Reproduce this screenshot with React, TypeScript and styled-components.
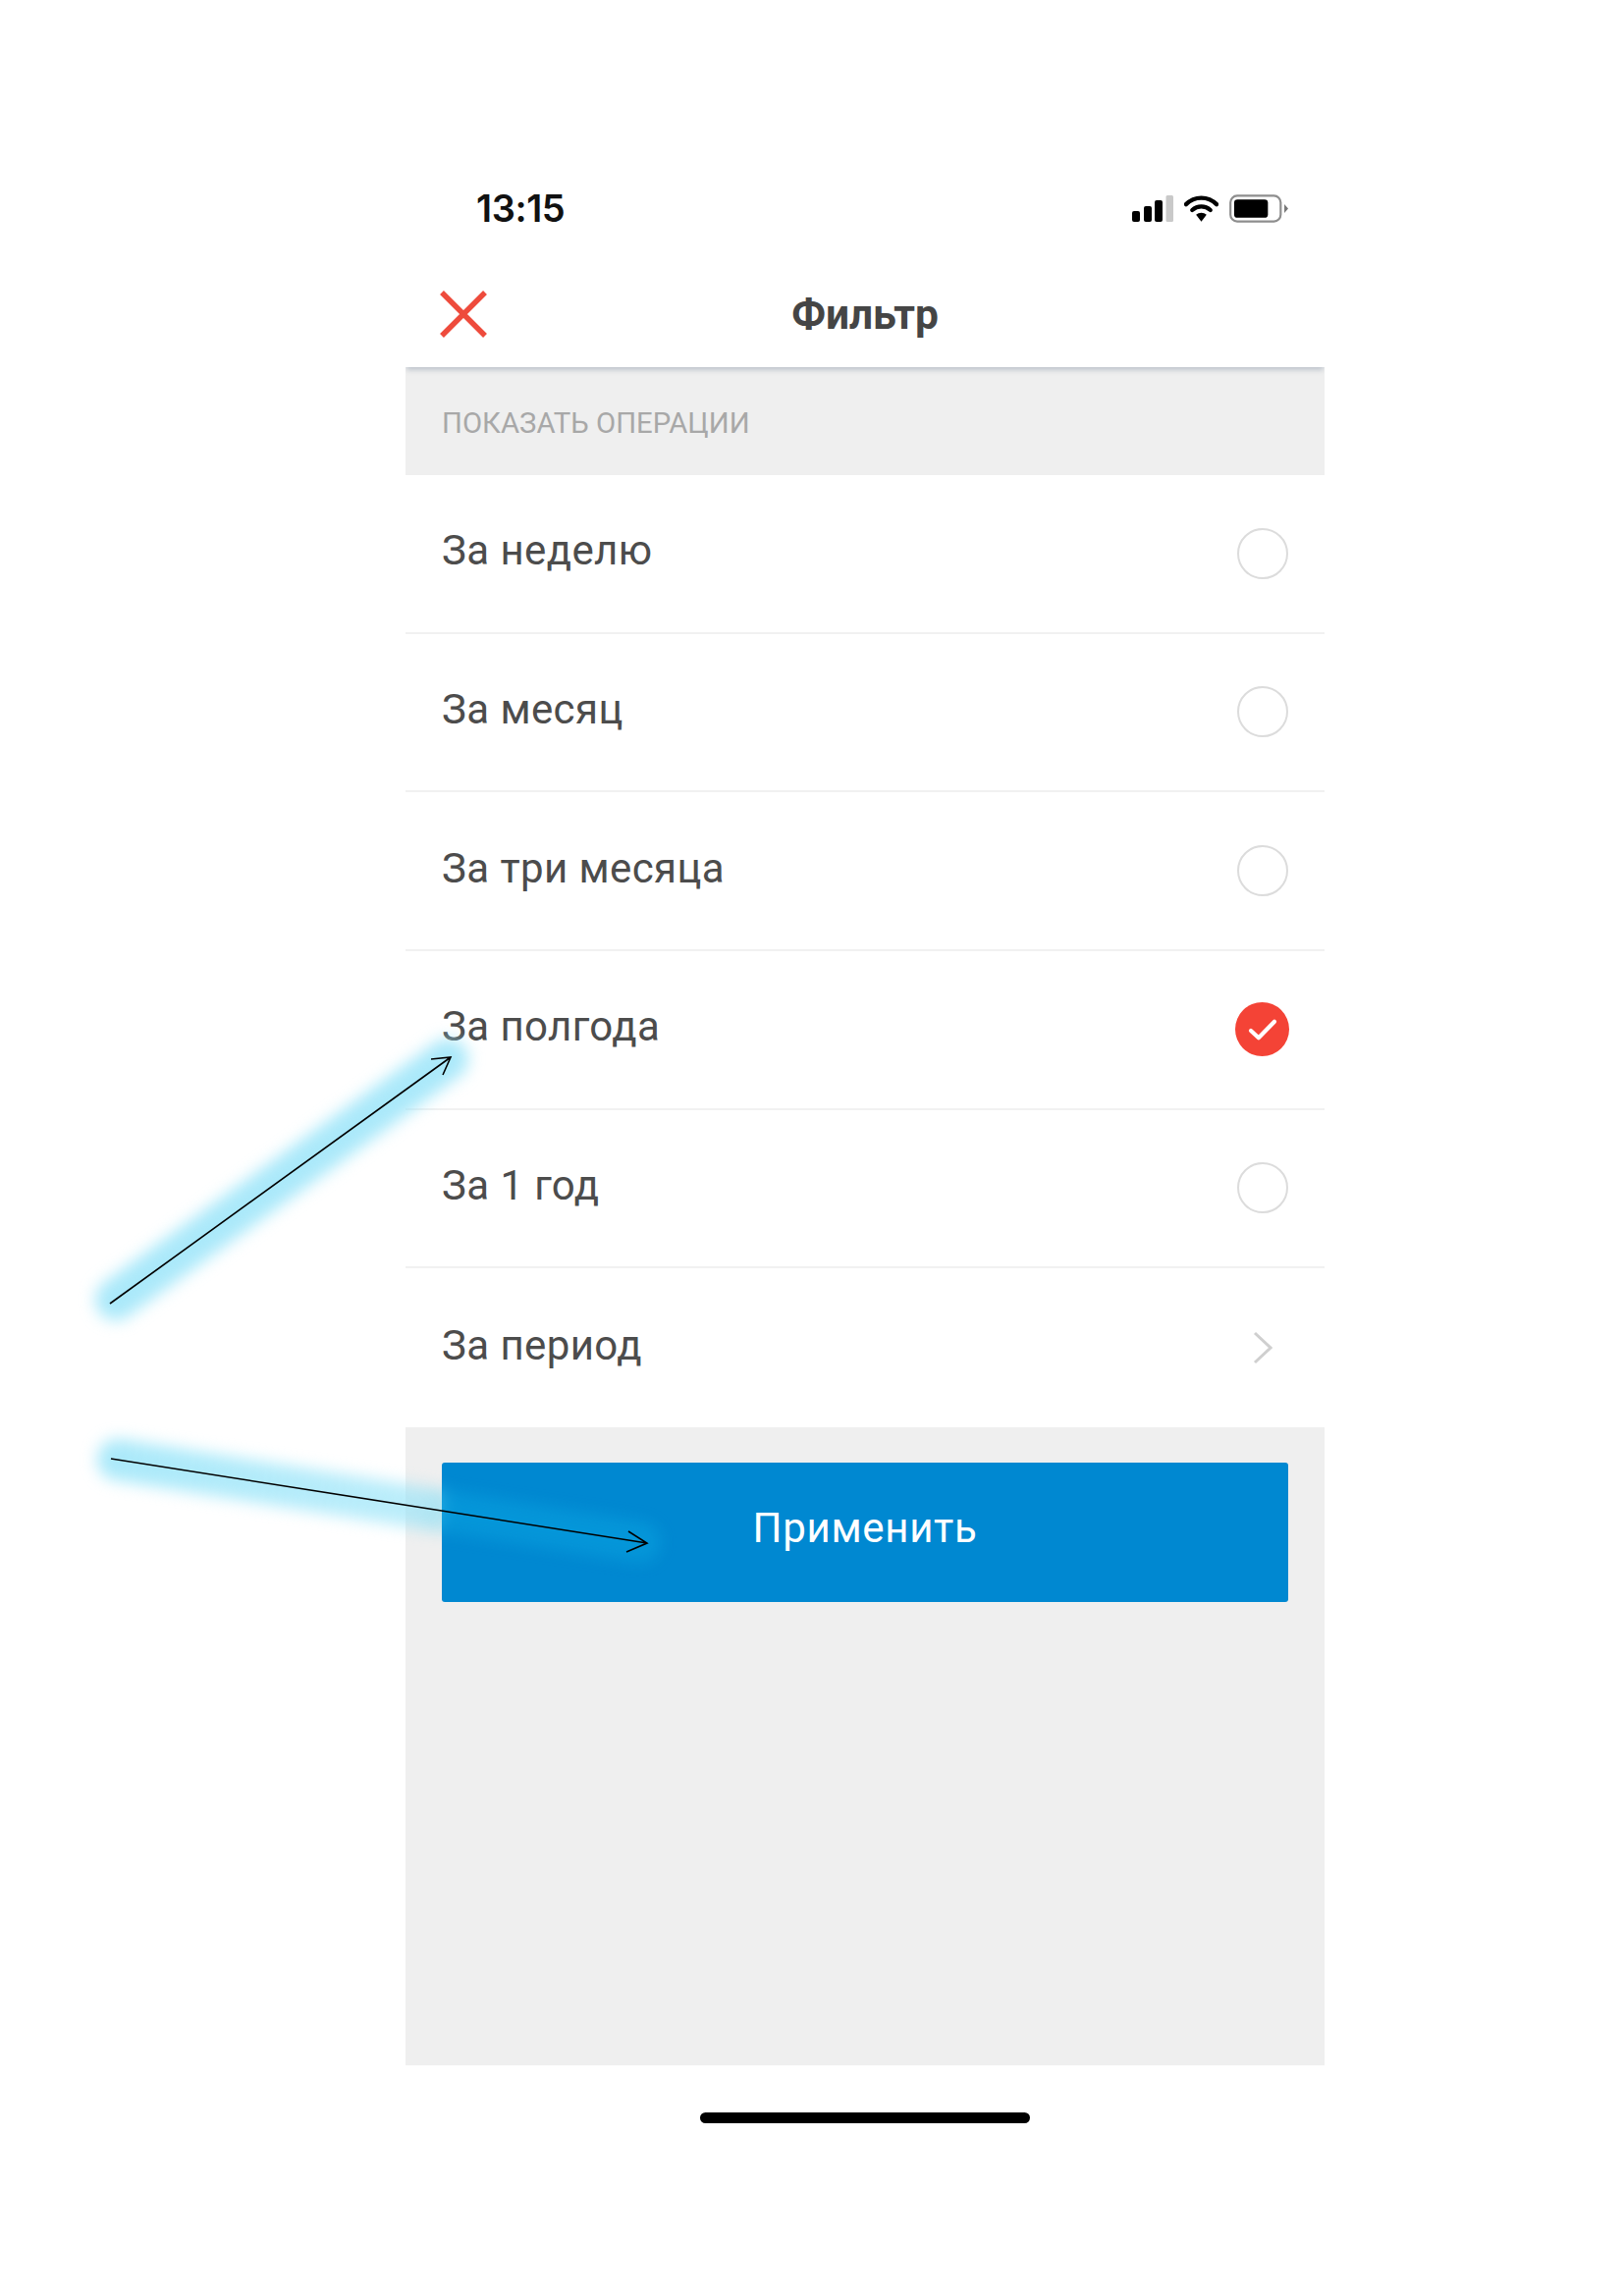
import React from 'react';
import styled, { createGlobalStyle } from 'styled-components';

const GlobalStyle = createGlobalStyle`
  html, body {
    margin: 0;
    padding: 0;
    background: #fff;
  }
`;

const Page = styled.div`
  position: relative;
  width: 1654px;
  height: 2339px;
  overflow: hidden;
  background: #fff;
  padding: 164px 0 0 413px;
  box-sizing: border-box;
  font-family: Roboto, "Liberation Sans", sans-serif;
`;

const Phone = styled.div`
  width: 936px;
  display: flex;
  flex-direction: column;
`;

const StatusBar = styled.div`
  height: 96px;
  display: flex;
  align-items: center;
  justify-content: space-between;
  padding: 0 37px 0 72px;
`;

const Clock = styled.span`
  font-family: Inter, Roboto, sans-serif;
  font-size: 38px;
  font-weight: 600;
  letter-spacing: -0.4px;
  color: #111;
`;

const StatusIcons = styled.div`
  display: flex;
  align-items: center;
  gap: 11px;
`;

const NavBar = styled.header`
  position: relative;
  height: 114px;
  display: flex;
  align-items: center;
  justify-content: center;
  background: #fff;
  box-shadow: 0 4px 5px -1px rgba(120, 135, 155, 0.4);
  clip-path: inset(0 0 -10px 0);
  z-index: 1;
`;

const CloseButton = styled.button`
  position: absolute;
  left: 34px;
  top: 35px;
  padding: 0;
  border: 0;
  background: none;
  line-height: 0;
`;

const Title = styled.h1`
  margin: 6px 0 0;
  font-size: 42.5px;
  font-weight: 700;
  color: #454545;
`;

const SectionLabel = styled.div`
  height: 110px;
  display: flex;
  align-items: center;
  padding: 4px 37px 0;
  box-sizing: border-box;
  background: #efefef;
  font-size: 29.3px;
  color: #a8a8a8;
`;

const List = styled.div`
  display: flex;
  flex-direction: column;
`;

const Row = styled.div`
  height: 161.67px;
  box-sizing: border-box;
  display: flex;
  align-items: center;
  justify-content: space-between;
  padding: 0 37px;
  background: #fff;
  border-bottom: 2px solid #f1f1f1;

  &:last-child {
    border-bottom: 0;
  }
`;

const RowLabel = styled.span`
  font-size: 42px;
  color: #4c4c4c;
  letter-spacing: 0.4px;
  margin-top: -6px;
`;

const Radio = styled.span`
  width: 52px;
  height: 52px;
  box-sizing: border-box;
  border: 2.5px solid #dcdcdc;
  border-radius: 50%;
`;

const Checked = styled.span`
  width: 55px;
  height: 55px;
  margin-right: -1px;
  border-radius: 50%;
  background: #f44336;
  display: flex;
  align-items: center;
  justify-content: center;
`;

const Chevron = styled.svg`
  width: 20px;
  height: 34px;
  margin-right: 16px;
`;

const Footer = styled.div`
  height: 650px;
  box-sizing: border-box;
  padding: 36px 37px 0;
  background: #efefef;
`;

const ApplyButton = styled.button`
  width: 100%;
  height: 142px;
  border: 0;
  border-radius: 3px;
  padding: 0 0 8px;
  background: #0088d1;
  color: #fff;
  font-family: inherit;
  font-size: 42px;
  letter-spacing: 0.7px;
`;

const HomeIndicator = styled.div`
  align-self: center;
  width: 336px;
  height: 11px;
  margin-top: 48px;
  border-radius: 6px;
  background: #000;
`;

const Annotations = styled.svg`
  position: absolute;
  left: 0;
  top: 0;
  z-index: 2;
  pointer-events: none;
`;

const periods = ['За неделю', 'За месяц', 'За три месяца', 'За полгода', 'За 1 год', 'За период'];

const Trailing = ({ label }: { label: string }) => {
  if (label === 'За период') {
    return (
      <Chevron viewBox="0 0 20 34">
        <path d="M2 2 L18 17 L2 32" fill="none" stroke="#cfcfcf" strokeWidth="3" />
      </Chevron>
    );
  }
  if (label === 'За полгода') {
    return (
      <Checked>
        <svg width="30" height="24" viewBox="0 0 32 26">
          <path d="M3 14 L11.5 22 L29 4" fill="none" stroke="#fff" strokeWidth="4.5" strokeLinecap="round" strokeLinejoin="round" />
        </svg>
      </Checked>
    );
  }
  return <Radio />;
};

const App: React.FC = () => {
  return (
    <Page>
      <GlobalStyle />
      <Phone>
        <StatusBar>
          <Clock>13:15</Clock>
          <StatusIcons>
            <svg width="42" height="27" viewBox="0 0 42 27">
              <rect x="0" y="16" width="8" height="11" rx="2" fill="#000" />
              <rect x="12" y="11" width="8" height="16" rx="2" fill="#000" />
              <rect x="23" y="5" width="8" height="22" rx="2" fill="#000" />
              <rect x="34.5" y="0" width="7.5" height="27" rx="1.5" fill="#c9c9c9" />
            </svg>
            <svg width="35" height="27" viewBox="0 0 36 27">
              <path d="M2 9 C11 0 25 0 34 9" fill="none" stroke="#000" strokeWidth="4.4" strokeLinecap="round" />
              <path d="M8.5 15 C14 10 22 10 27.5 15" fill="none" stroke="#000" strokeWidth="4.4" strokeLinecap="round" />
              <path d="M12.5 20 C15.5 17 20.5 17 23.5 20 L18 27 Z" fill="#000" />
            </svg>
            <svg width="60" height="29" viewBox="0 0 61 29">
              <rect x="1.2" y="1.2" width="52" height="26.6" rx="7" fill="#fff" stroke="#8e8e8e" strokeWidth="2.2" />
              <rect x="5" y="5" width="35" height="19" rx="3.5" fill="#000" />
              <path d="M57 10 L61 14.5 L57 19 Z" fill="#777" />
            </svg>
          </StatusIcons>
        </StatusBar>
        <NavBar>
          <CloseButton>
            <svg width="50" height="50" viewBox="0 0 50 50">
              <path d="M3 3 L47 47 M47 3 L3 47" stroke="#ee4b3c" strokeWidth="5.5" fill="none" />
            </svg>
          </CloseButton>
          <Title>Фильтр</Title>
        </NavBar>
        <SectionLabel>ПОКАЗАТЬ ОПЕРАЦИИ</SectionLabel>
        <List>
          {periods.map((label) => (
            <Row key={label}>
              <RowLabel>{label}</RowLabel>
              <Trailing label={label} />
            </Row>
          ))}
        </List>
        <Footer>
          <ApplyButton>Применить</ApplyButton>
        </Footer>
        <HomeIndicator />
      </Phone>

      {/* highlighter arrows drawn on top of the screenshot */}
      <Annotations width="1654" height="2339" viewBox="0 0 1654 2339">
        <defs>
          <filter id="glow" x="-20%" y="-80%" width="140%" height="260%" colorInterpolationFilters="sRGB">
            <feGaussianBlur stdDeviation="8" />
          </filter>
          <linearGradient id="fade" gradientUnits="userSpaceOnUse" x1="113" y1="1486" x2="659" y2="1572">
            <stop offset="0" stopColor="#8fe2f8" stopOpacity="0.75" />
            <stop offset="0.58" stopColor="#8fe2f8" stopOpacity="0.6" />
            <stop offset="0.63" stopColor="#14c8f5" stopOpacity="0.22" />
            <stop offset="1" stopColor="#14c8f5" stopOpacity="0.22" />
          </linearGradient>
        </defs>
        <path d="M118 1324 L456 1079" stroke="#8fe2f8" strokeOpacity="0.75" strokeWidth="42" strokeLinecap="round" fill="none" filter="url(#glow)" />
        <path d="M120 1487 L652 1571" stroke="url(#fade)" strokeWidth="42" strokeLinecap="round" fill="none" filter="url(#glow)" />
        <g fill="none" stroke="#000" strokeWidth="1.6">
          <path d="M112 1328 L459 1077 M439 1079 L459 1077 L451 1095" />
          <path d="M113 1486 L659 1572 M640 1560 L659 1572 L638 1581" />
        </g>
      </Annotations>
    </Page>
  );
};

export default App;
